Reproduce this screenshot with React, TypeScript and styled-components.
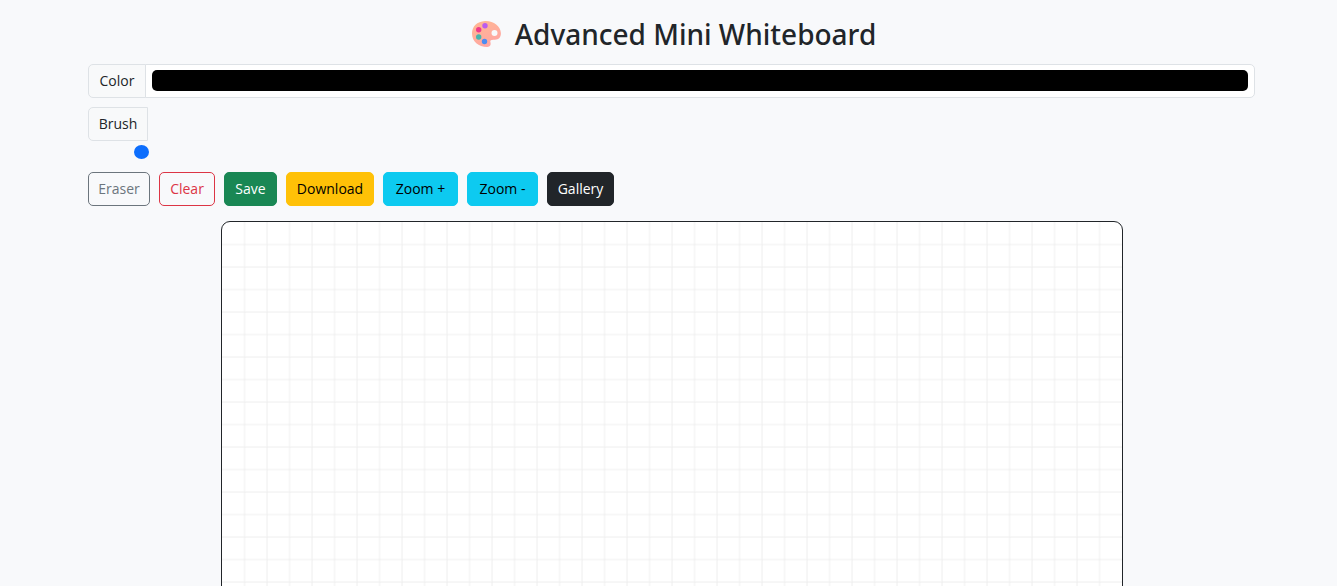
import React, { useEffect, useRef, useState } from "react";
import styled, { createGlobalStyle } from "styled-components";

const GlobalStyle = createGlobalStyle`
  *, *::before, *::after { box-sizing: border-box; }
  body {
    margin: 0;
    background: #f8f9fb;
    color: #212529;
    font-family: "Segoe UI", "Open Sans", "Noto Sans", sans-serif;
    font-size: 14px;
    line-height: 20px;
  }
`;

const Page = styled.main`
  padding: 14px 0 15px 6px;
`;

const Container = styled.div`
  max-width: 1167px;
  margin: 0 auto;
`;

const Title = styled.h1`
  display: flex;
  justify-content: center;
  align-items: center;
  gap: 13px;
  margin: 0 0 10px;
  padding-left: 4px;
  font-family: "Segoe UI", "Noto Sans", "Open Sans", sans-serif;
  font-size: 28px;
  font-weight: 500;
  line-height: 40px;
`;

const PaletteIcon = styled.svg`
  width: 31px;
  height: 28px;
  flex: none;
`;

const Controls = styled.div`
  display: flex;
  flex-direction: column;
  gap: 9px;
  margin-bottom: 15px;
`;

const ButtonRow = styled.div`
  display: flex;
  flex-wrap: wrap;
  gap: 9px;
`;

const ColorGroup = styled.div`
  display: flex;
`;

const BrushGroup = styled.div`
  display: flex;
  flex-direction: column;
  width: 61px;
`;

const GroupLabel = styled.label<{ $width: number }>`
  display: flex;
  justify-content: center;
  align-items: center;
  width: ${(p) => p.$width}px;
  height: 34px;
  border: 1px solid #dee2e6;
  border-radius: 5px 0 0 5px;
  background: #f8f9fa;
`;

const ColorInput = styled.input`
  appearance: none;
  flex: 1;
  min-width: 0;
  height: 34px;
  margin: 0 0 0 -1px;
  padding: 5px 6px 6px;
  border: 1px solid #dee2e6;
  border-radius: 0 5px 5px 0;
  background: #fff;

  &::-webkit-color-swatch-wrapper { padding: 0; }
  &::-webkit-color-swatch { border: 0; border-radius: 5px; }
`;

const BrushInput = styled.input`
  appearance: none;
  align-self: flex-end;
  width: 15px;
  height: 22px;
  margin: 0;
  background: transparent;

  &::-webkit-slider-thumb {
    appearance: none;
    width: 15px;
    height: 14px;
    border: 0;
    border-radius: 50%;
    background: #0d6efd;
  }
`;

const Button = styled.button<{ $bg?: string; $fg: string; $line: string; $width: number }>`
  width: ${(p) => p.$width}px;
  height: 34px;
  padding: 0;
  border: 1px solid ${(p) => p.$line};
  border-radius: 5px;
  background: ${(p) => p.$bg ?? "transparent"};
  color: ${(p) => p.$fg};
  font: inherit;
  white-space: nowrap;
  cursor: pointer;
`;

const Board = styled.canvas`
  display: block;
  width: 902px;
  max-width: 100%;
  margin: 0 auto;
  border: 1px solid #212529;
  border-radius: 9px;
  background: #fff;
  cursor: crosshair;
`;

const actions = [
  { text: "Eraser", width: 62, fg: "#6c757d", line: "#6c757d" },
  { text: "Clear", width: 56, fg: "#dc3545", line: "#dc3545" },
  { text: "Save", width: 53, bg: "#198754", fg: "#fff", line: "#198754" },
  { text: "Download", width: 88, bg: "#ffc107", fg: "#000", line: "#ffc107" },
  { text: "Zoom +", width: 75, bg: "#0dcaf0", fg: "#000", line: "#0dcaf0" },
  { text: "Zoom -", width: 71, bg: "#0dcaf0", fg: "#000", line: "#0dcaf0" },
  { text: "Gallery", width: 67, bg: "#212529", fg: "#fff", line: "#212529" },
];

const GRID = 25;

function Palette() {
  return (
    <PaletteIcon viewBox="0 0 31 28" aria-hidden="true">
      <defs>
        <linearGradient id="wood" x1="0" y1="0" x2="0.5" y2="1">
          <stop offset="0" stopColor="#ffb991" />
          <stop offset="1" stopColor="#ffa6a3" />
        </linearGradient>
      </defs>
      <path
        fill="url(#wood)"
        fillRule="evenodd"
        d="M14 1C22 .5 29.600 6 29.900 13C30.100 17.500 27.500 19.900 23.500 19.700C20.500 19.500 18.700 20 19.400 22.300C20.100 24.600 19.300 26.900 16.200 26.900C7.500 26.900 1 21.500 1 13.500C1 6.500 6 1.500 14 1ZM23.500 10A3 3 0 1 0 23.500 16A3 3 0 1 0 23.500 10Z"
      />
      <circle cx="14" cy="5.700" r="2.700" fill="#b95cf0" />
      <circle cx="7.700" cy="9.700" r="2.700" fill="#f03a8c" />
      <circle cx="7.700" cy="17" r="2.700" fill="#45b5ad" />
      <circle cx="13.500" cy="21.500" r="2.700" fill="#4b8df2" />
    </PaletteIcon>
  );
}

export default function App() {
  const board = useRef<HTMLCanvasElement>(null);
  const [color, setColor] = useState("#000000");
  const [brush, setBrush] = useState(5);

  useEffect(() => {
    const canvas = board.current;
    const ctx = canvas?.getContext("2d");
    if (!canvas || !ctx) return;
    ctx.clearRect(0, 0, canvas.width, canvas.height);
    ctx.strokeStyle = "#eeeeee";
    ctx.lineWidth = 1;
    ctx.beginPath();
    for (let x = GRID; x < canvas.width; x += GRID) {
      ctx.moveTo(x, 0);
      ctx.lineTo(x, canvas.height);
    }
    for (let y = GRID; y < canvas.height; y += GRID) {
      ctx.moveTo(0, y);
      ctx.lineTo(canvas.width, y);
    }
    ctx.stroke();
  }, []);

  return (
    <>
      <GlobalStyle />
      <Page>
        <Container>
          <Title>
            <Palette />
            Advanced Mini Whiteboard
          </Title>
          <Controls>
            <ColorGroup>
              <GroupLabel htmlFor="color" $width={58}>Color</GroupLabel>
              <ColorInput
                id="color"
                type="color"
                value={color}
                onChange={(e) => setColor(e.target.value)}
              />
            </ColorGroup>
            <BrushGroup>
              <GroupLabel htmlFor="brush" $width={60}>Brush</GroupLabel>
              <BrushInput
                id="brush"
                type="range"
                min={1}
                max={50}
                value={brush}
                onChange={(e) => setBrush(Number(e.target.value))}
              />
            </BrushGroup>
            <ButtonRow>
              {actions.map((a) => (
                <Button key={a.text} type="button" $width={a.width} $bg={a.bg} $fg={a.fg} $line={a.line}>
                  {a.text}
                </Button>
              ))}
            </ButtonRow>
          </Controls>
          <Board ref={board} width={1000} height={600} />
        </Container>
      </Page>
    </>
  );
}
